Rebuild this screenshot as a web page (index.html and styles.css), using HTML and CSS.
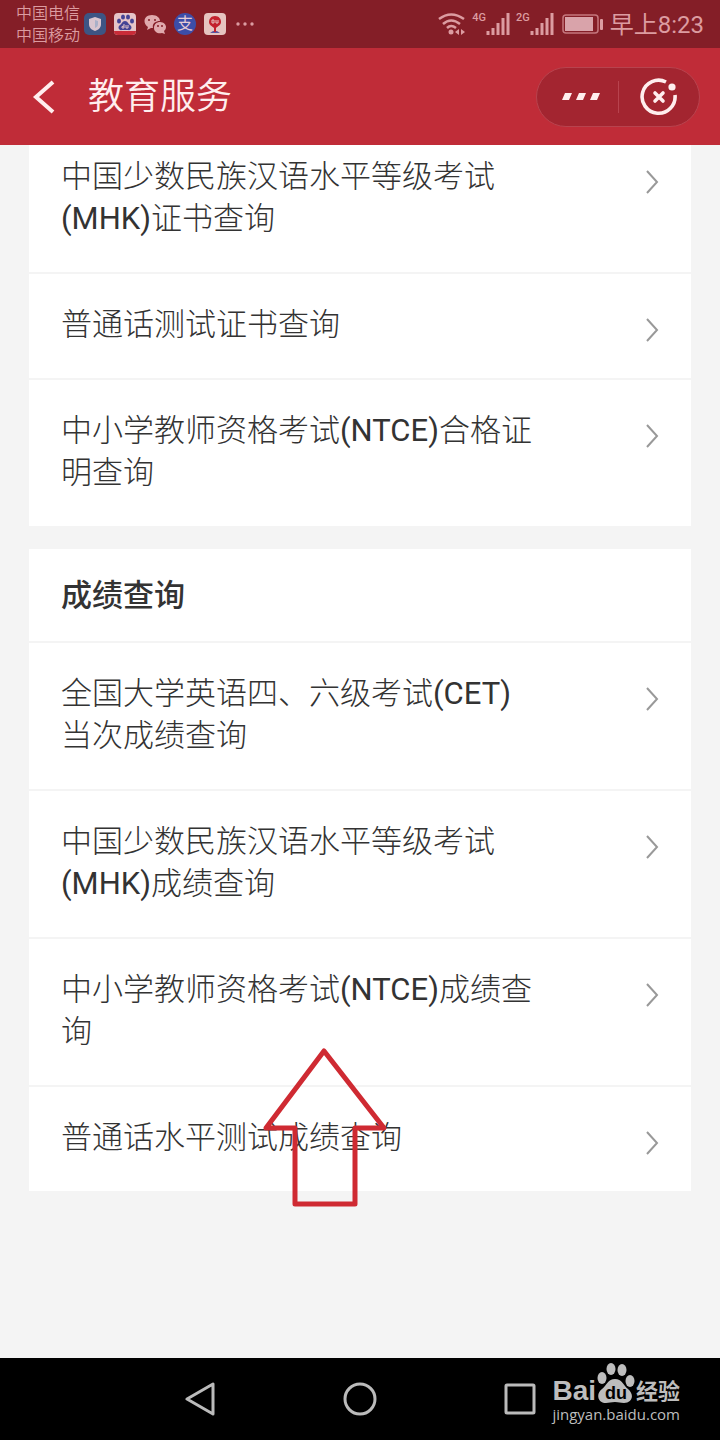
FILE: index.html
```html
<!doctype html>
<html lang="zh-CN">
	<head>
		<meta charset="utf-8">
		<meta name="viewport" content="width=device-width, initial-scale=1">
		<title>教育服务</title>
		<link rel="stylesheet" href="styles.css">
	</head>

	<body>
		<div class="status-bar">
			<div class="carriers">
				<span>中国电信</span>
				<span>中国移动</span>
			</div>
			<div class="app-icons">
				<svg width="22" height="22" viewBox="0 0 22 22">
					<rect width="22" height="22" rx="5" fill="#3d5584"></rect>
					<path fill="#d9c5cf" d="M11 4l6 2v5c0 4-3 6-6 7-3-1-6-3-6-7V6z"></path>
					<path fill="#a9b0c8" d="M11 7l3 1v3c0 2-1 3-3 4z"></path>
				</svg>
				<svg width="22" height="22" viewBox="0 0 22 22">
					<rect width="22" height="22" rx="4" fill="#e6c4c8"></rect>
					<path fill="#c92c38" d="M0 18h22q0 4-4 4H4q-4 0-4-4z"></path>
					<g fill="#454394">
						<ellipse cx="5" cy="8" rx="2" ry="2.6"></ellipse>
						<ellipse cx="9" cy="4" rx="2" ry="2.6"></ellipse>
						<ellipse cx="14" cy="4" rx="2" ry="2.6"></ellipse>
						<ellipse cx="18" cy="8" rx="2" ry="2.6"></ellipse>
						<path d="M11 8c3 0 3 3 5 4 3 2 1 6-2 5H8c-3 1-5-3-2-5 2-1 2-4 5-4z"></path>
					</g>
					<path fill="none" stroke="#e6c4c8" d="M10 11v4H8q-1-2 2-2M12 12v3h2v-3"></path>
				</svg>
				<svg width="22" height="22" viewBox="0 0 22 22">
					<path fill="#e0a9ad" d="M8 2c5 0 8 3 8 6-5 0-8 3-7 7H7l-4 2 1-3C-2 10 0 2 8 2z"></path>
					<path fill="#e0a9ad" d="M16 9c4 0 6 3 6 5 0 2-1 3-2 4l1 3-3-1c-4 1-8-1-8-5 0-4 3-6 6-6z"></path>
					<g fill="#841e27">
						<circle cx="5" cy="7" r="1"></circle>
						<circle cx="11" cy="7" r="1"></circle>
						<circle cx="14" cy="13" r="1"></circle>
						<circle cx="18" cy="13" r="1"></circle>
					</g>
				</svg>
				<span class="pay-icon">支</span>
				<svg width="22" height="22" viewBox="0 0 22 22">
					<rect width="22" height="22" rx="4" fill="#e6c4c0"></rect>
					<path fill="#5b55a0" d="M6 20l3-2h4l3 2z"></path>
					<path fill="#c3202c" d="M11 3c4 0 6 3 6 6 0 3-3 4-5 6v4h-2v-4C8 13 5 12 5 9c0-3 2-6 6-6z"></path>
					<path fill="none" stroke="#e6c4c0" d="M8 10V7h2v3zM12 7v3h2V7"></path>
				</svg>
				<svg class="more-dots" width="18" height="22" viewBox="0 0 18 22">
					<circle cx="2" cy="11" r="1.7"></circle>
					<circle cx="9" cy="11" r="1.7"></circle>
					<circle cx="16" cy="11" r="1.7"></circle>
				</svg>
			</div>

			<div class="signals">
				<svg width="28" height="24" viewBox="0 0 28 24">
					<g fill="none" stroke="#dc9ca1" stroke-width="2.5">
						<path d="M1 7Q13-2 26 7"></path>
						<path d="M5 12Q13 5 22 12"></path>
						<path d="M9 16Q13 12 18 16"></path>
					</g>
					<circle cx="13" cy="20" r="2.5" fill="#dc9ca1"></circle>
					<path fill="#dc9ca1" d="M21 17v6l-4-3zM23 17v6l4-3z"></path>
				</svg>
				<div class="signal">
					<span>4G</span>
					<svg width="24" height="24" viewBox="0 0 24 24">
						<path d="M2 19v4M7 16v7M12 11v12M17 6v17M22 1v22"></path>
					</svg>
				</div>
				<div class="signal">
					<span>2G</span>
					<svg width="24" height="24" viewBox="0 0 24 24">
						<path d="M2 19v4M7 16v7M12 11v12M17 6v17M22 1v22"></path>
					</svg>
				</div>
				<svg class="battery" width="42" height="20" viewBox="0 0 42 20">
					<rect x="1" y="1" width="35" height="18" rx="3" fill="none" stroke="#c5777e" stroke-width="1.5"></rect>
					<rect x="3" y="3" width="28" height="14" fill="#d9a3aa"></rect>
					<rect x="38" y="5" width="3" height="11" rx="1" fill="#dc9ca1"></rect>
				</svg>
				<span class="clock">早上8:23</span>
			</div>
		</div>

		<header class="title-bar">
			<button class="back-button" aria-label="返回">
				<svg width="24" height="34" viewBox="0 0 24 34">
					<path d="M21 2L4 17l17 15"></path>
				</svg>
			</button>
			<h1>教育服务</h1>
			<div class="capsule">
				<button class="capsule-button" aria-label="更多">
					<svg width="46" height="8" viewBox="0 0 46 8">
						<path fill="#ffeeee" d="M10 0h7l-3 7H7zM24 0h7l-3 7h-7zM38 0h7l-3 7h-7z"></path>
					</svg>
				</button>
				<button class="capsule-button" aria-label="关闭">
					<svg width="38" height="38" viewBox="0 0 38 38">
						<g fill="none" stroke="#ffeeee" stroke-width="3.6">
							<path d="M26 4A16.5 16.5 0 1 0 35 17"></path>
							<path stroke-linecap="round" d="M15 15l8 8M23 15l-8 8"></path>
						</g>
						<circle cx="32" cy="9" r="3.6" fill="#ffeeee"></circle>
					</svg>
				</button>
			</div>
		</header>

		<main class="content">
			<section class="card card-scrolled">
				<a class="row" href="#">
					<span>中国少数民族汉语水平等级考试<b>(MHK)</b>证书查询</span>
					<svg class="chevron" width="14" height="24" viewBox="0 0 14 24"><path d="M2 1l10 11L2 23"></path></svg>
				</a>
				<a class="row" href="#">
					<span>普通话测试证书查询</span>
					<svg class="chevron" width="14" height="24" viewBox="0 0 14 24"><path d="M2 1l10 11L2 23"></path></svg>
				</a>
				<a class="row" href="#">
					<span>中小学教师资格考试<b>(NTCE)</b>合格证明查询</span>
					<svg class="chevron" width="14" height="24" viewBox="0 0 14 24"><path d="M2 1l10 11L2 23"></path></svg>
				</a>
			</section>

			<section class="card">
				<h2>成绩查询</h2>
				<a class="row" href="#">
					<span>全国大学英语四、六级考试<b>(CET)</b>当次成绩查询</span>
					<svg class="chevron" width="14" height="24" viewBox="0 0 14 24"><path d="M2 1l10 11L2 23"></path></svg>
				</a>
				<a class="row" href="#">
					<span>中国少数民族汉语水平等级考试<b>(MHK)</b>成绩查询</span>
					<svg class="chevron" width="14" height="24" viewBox="0 0 14 24"><path d="M2 1l10 11L2 23"></path></svg>
				</a>
				<a class="row" href="#">
					<span>中小学教师资格考试<b>(NTCE)</b>成绩查询</span>
					<svg class="chevron" width="14" height="24" viewBox="0 0 14 24"><path d="M2 1l10 11L2 23"></path></svg>
				</a>
				<a class="row" href="#">
					<span>普通话水平测试成绩查询</span>
					<svg class="chevron" width="14" height="24" viewBox="0 0 14 24"><path d="M2 1l10 11L2 23"></path></svg>
				</a>
				<svg class="arrow" width="126" height="160" viewBox="0 0 126 160">
					<path d="M62 4l60 77H93v76H33V81H4z"></path>
				</svg>
			</section>
		</main>

		<nav class="nav-bar">
			<button aria-label="返回键">
				<svg width="34" height="34" viewBox="0 0 34 34"><path d="M30 2v30L4 17z"></path></svg>
			</button>
			<button aria-label="主页键">
				<svg width="34" height="34" viewBox="0 0 34 34"><circle cx="17" cy="17" r="15"></circle></svg>
			</button>
			<button aria-label="多任务键">
				<svg width="34" height="34" viewBox="0 0 34 34"><rect x="3" y="3" width="28" height="28" rx="1"></rect></svg>
			</button>
			<div class="watermark">
				<div class="watermark-logo">
					<span class="watermark-bai">Bai</span>
					<span class="paw">
						<svg width="38" height="42" viewBox="0 0 38 42">
							<ellipse cx="5" cy="16" rx="4.5" ry="6"></ellipse>
							<ellipse cx="14" cy="7" rx="4.5" ry="6"></ellipse>
							<ellipse cx="25" cy="8" rx="4.5" ry="6"></ellipse>
							<ellipse cx="33" cy="19" rx="4.5" ry="6"></ellipse>
							<path d="M18 17c7 0 8 6 13 10 7 6 4 14-4 14-4 0-5-1-9-1s-6 1-9 1c-9 0-10-10-4-14 5-4 6-10 13-10z"></path>
						</svg>
						<span class="paw-text">du</span>
					</span>
					<span class="watermark-cn">经验</span>
				</div>
				<span class="watermark-url">jingyan.baidu.com</span>
			</div>
		</nav>
	</body>
</html>
```

FILE: styles.css
```css
* {
	box-sizing: border-box;
}

body {
	margin: 0;
	min-height: 100vh;
	display: flex;
	flex-direction: column;
	font-family: Roboto, "Noto Sans CJK SC", sans-serif;
	background-color: #f4f4f4;
	color: #333333;
}

svg {
	display: block;
	flex-shrink: 0;
}

button {
	display: flex;
	align-items: center;
	justify-content: center;
	padding: 0;
	border: none;
	background: none;
	cursor: pointer;
}

/* status bar */
.status-bar {
	display: flex;
	align-items: center;
	height: 48px;
	padding: 0 16px;
	background-color: #841e27;
	color: #dc9ca1;
	white-space: nowrap;
}

.carriers {
	display: flex;
	flex-direction: column;
	font-size: 16px;
	font-weight: 350;
	line-height: 22px;
	padding-top: 2px;
}

.app-icons {
	display: flex;
	align-items: center;
	gap: 8px;
	margin-left: 4px;
}

.pay-icon {
	width: 22px;
	height: 22px;
	border-radius: 50%;
	background-color: #3c4da8;
	color: #e6ccd6;
	font-size: 16px;
	line-height: 22px;
	text-align: center;
}

.more-dots {
	margin-left: 2px;
	fill: #dc9ca1;
}

.signals {
	display: flex;
	align-items: center;
	margin-left: auto;
}

.signal {
	display: flex;
	align-items: flex-start;
	margin-left: 6px;
}

.signal span {
	font-size: 11px;
	font-weight: 500;
	line-height: 12px;
}

.signal path {
	fill: none;
	stroke: #dc9ca1;
	stroke-width: 3px;
}

.battery {
	margin-left: 8px;
}

.clock {
	margin-left: 6px;
	padding-top: 2px;
	font-size: 24px;
	line-height: 32px;
}

/* title bar */
.title-bar {
	display: flex;
	align-items: center;
	height: 97px;
	padding: 0 20px 0 32px;
	background-color: #c02c38;
	color: #ffeeee;
}

.back-button path {
	fill: none;
	stroke: #ffeeee;
	stroke-width: 4px;
}

.title-bar h1 {
	margin: 0 0 0 32px;
	font-size: 36px;
	font-weight: 350;
	line-height: 48px;
}

.capsule {
	display: flex;
	width: 164px;
	height: 60px;
	margin-left: auto;
	border: 1px solid #b8434e;
	border-radius: 30px;
	background-color: #a32530;
}

.capsule-button {
	flex: 1;
	position: relative;
}

.capsule-button + .capsule-button::before {
	content: "";
	position: absolute;
	left: 0;
	top: 13px;
	width: 1px;
	height: 32px;
	background-color: #b8434e;
}

/* lists */
.content {
	flex: 1;
	padding: 0 29px;
	overflow: hidden;
}

.card {
	position: relative;
	margin-bottom: 23px;
	background-color: #ffffff;
}

/* top of the first card is scrolled under the title bar */
.card-scrolled {
	margin-top: -19px;
}

.card h2 {
	margin: 0;
	padding: 26px 32px 24px;
	border-bottom: 2px solid #f4f4f4;
	font-size: 31px;
	font-weight: 500;
	line-height: 42px;
}

.row {
	display: flex;
	align-items: flex-start;
	padding: 30px 32px 32px;
	border-bottom: 2px solid #f4f4f4;
	color: #333333;
	font-size: 31px;
	font-weight: 300;
	line-height: 42px;
	text-decoration: none;
}

.row:last-of-type {
	border-bottom: none;
}

.row span {
	flex: 1;
	margin-right: 106px;
}

.row b {
	font-weight: 400;
}

.chevron {
	margin-top: 14px;
}

.chevron path {
	fill: none;
	stroke: #999999;
	stroke-width: 2px;
}

.arrow {
	position: absolute;
	left: 233px;
	bottom: -16px;
	pointer-events: none;
}

.arrow path {
	fill: none;
	stroke: #cf2a32;
	stroke-width: 5px;
	stroke-linejoin: round;
}

/* system navigation */
.nav-bar {
	position: relative;
	display: flex;
	align-items: center;
	justify-content: center;
	gap: 126px;
	height: 82px;
	background-color: #000000;
}

.nav-bar button svg {
	fill: none;
	stroke: #bbbbbb;
	stroke-width: 3px;
	stroke-linejoin: round;
}

.watermark {
	position: absolute;
	right: 40px;
	top: 4px;
	color: #bdbdbd;
}

.watermark-logo {
	display: flex;
	align-items: flex-end;
	justify-content: flex-end;
	gap: 1px;
	height: 42px;
}

.watermark-bai {
	font-family: "Liberation Sans", sans-serif;
	font-size: 28px;
	font-weight: 700;
	line-height: 26px;
}

.paw {
	position: relative;
	fill: #bdbdbd;
}

.paw-text {
	position: absolute;
	left: 0;
	right: 0;
	bottom: 2px;
	color: #000000;
	font-family: "Liberation Sans", sans-serif;
	font-size: 18px;
	font-weight: 700;
	line-height: 18px;
	text-align: center;
}

.watermark-cn {
	font-size: 22px;
	font-weight: 700;
	line-height: 24px;
}

.watermark-url {
	display: block;
	font-family: "Open Sans", sans-serif;
	font-size: 15px;
	line-height: 20px;
}
```
